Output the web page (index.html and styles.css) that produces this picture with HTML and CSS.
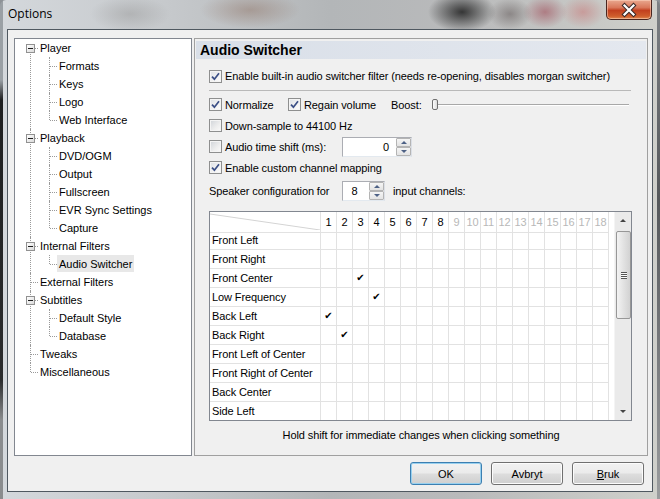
FILE: index.html
```html
<!DOCTYPE html>
<html lang="en">
<head>
<meta charset="UTF-8">
<title>Options</title>
<link rel="stylesheet" href="styles.css">
</head>
<body>
<div class="window">
  <div class="titlebar">
    <span class="title">Options</span>
    <div class="close">
      <svg width="44" height="18" viewBox="0 0 44 18">
        <path d="M17.5 4.5 L26.5 13.5 M26.5 4.5 L17.5 13.5" stroke="#3a2a28" stroke-width="4.2" stroke-linecap="square"/>
        <path d="M17.5 4.5 L26.5 13.5 M26.5 4.5 L17.5 13.5" stroke="#fff" stroke-width="2.2" stroke-linecap="square"/>
      </svg>
    </div>
  </div>

  <div class="client">
    <div class="main">
      <!-- left page tree -->
      <ul class="tree">
        <li class="first"><div class="node"><span class="toggle"></span><span class="label">Player</span></div>
          <ul class="kids">
            <li><div class="node"><span class="label">Formats</span></div></li>
            <li><div class="node"><span class="label">Keys</span></div></li>
            <li><div class="node"><span class="label">Logo</span></div></li>
            <li class="last"><div class="node"><span class="label">Web Interface</span></div></li>
          </ul>
        </li>
        <li><div class="node"><span class="toggle"></span><span class="label">Playback</span></div>
          <ul class="kids">
            <li><div class="node"><span class="label">DVD/OGM</span></div></li>
            <li><div class="node"><span class="label">Output</span></div></li>
            <li><div class="node"><span class="label">Fullscreen</span></div></li>
            <li><div class="node"><span class="label">EVR Sync Settings</span></div></li>
            <li class="last"><div class="node"><span class="label">Capture</span></div></li>
          </ul>
        </li>
        <li><div class="node"><span class="toggle"></span><span class="label">Internal Filters</span></div>
          <ul class="kids">
            <li class="last"><div class="node"><span class="label selected">Audio Switcher</span></div></li>
          </ul>
        </li>
        <li><div class="node"><span class="label">External Filters</span></div></li>
        <li><div class="node"><span class="toggle"></span><span class="label">Subtitles</span></div>
          <ul class="kids">
            <li><div class="node"><span class="label">Default Style</span></div></li>
            <li class="last"><div class="node"><span class="label">Database</span></div></li>
          </ul>
        </li>
        <li><div class="node"><span class="label">Tweaks</span></div></li>
        <li class="last"><div class="node"><span class="label">Miscellaneous</span></div></li>
      </ul>

      <!-- right property page -->
      <div class="page">
        <div class="page-head">Audio Switcher</div>
        <div class="page-body">
          <div class="line first-line">
            <label class="opt"><span class="cb on"><svg width="9" height="9" viewBox="0 0 9 9"><path d="M1 4.6 L3.4 7.2 L8 1.2" fill="none" stroke="#3b4f86" stroke-width="1.7"/></svg></span>Enable built-in audio switcher filter (needs re-opening, disables morgan switcher)</label>
          </div>
          <div class="sep"></div>
          <div class="group">
            <div class="line">
              <label class="opt w-normalize"><span class="cb on"><svg width="9" height="9" viewBox="0 0 9 9"><path d="M1 4.6 L3.4 7.2 L8 1.2" fill="none" stroke="#3b4f86" stroke-width="1.7"/></svg></span>Normalize</label>
              <label class="opt w-regain"><span class="cb on"><svg width="9" height="9" viewBox="0 0 9 9"><path d="M1 4.6 L3.4 7.2 L8 1.2" fill="none" stroke="#3b4f86" stroke-width="1.7"/></svg></span>Regain volume</label>
              <span class="w-boost">Boost:</span>
              <div class="slider"><span class="thumb"></span></div>
            </div>
            <div class="line">
              <label class="opt"><span class="cb"></span>Down-sample to 44100 Hz</label>
            </div>
            <div class="line">
              <label class="opt w-shift"><span class="cb"></span>Audio time shift (ms):</label>
              <div class="spin spin-wide">
                <span class="val">0</span>
                <span class="spin-btns"><span class="up"></span><span class="down"></span></span>
              </div>
            </div>
            <div class="line">
              <label class="opt"><span class="cb on"><svg width="9" height="9" viewBox="0 0 9 9"><path d="M1 4.6 L3.4 7.2 L8 1.2" fill="none" stroke="#3b4f86" stroke-width="1.7"/></svg></span>Enable custom channel mapping</label>
            </div>
          </div>
          <div class="line speaker">
            <span class="w-shift">Speaker configuration for</span>
            <div class="spin spin-small">
              <span class="val center">8</span>
              <span class="spin-btns"><span class="up"></span><span class="down"></span></span>
            </div>
            <span class="after-spin">input channels:</span>
          </div>

          <div class="map">
            <div class="grid">
              <div class="row head">
                <span class="corner"><svg width="110" height="18"><line x1="0" y1="2" x2="110" y2="18" stroke="#d4d4d4"/></svg></span>
                <span>1</span><span>2</span><span>3</span><span>4</span><span>5</span><span>6</span><span>7</span><span>8</span>
                <span class="off">9</span><span class="off">10</span><span class="off">11</span><span class="off">12</span><span class="off">13</span><span class="off">14</span><span class="off">15</span><span class="off">16</span><span class="off">17</span><span class="off">18</span>
              </div>
              <div class="row"><span class="name">Front Left</span><span></span><span></span><span></span><span></span><span></span><span></span><span></span><span></span><span></span><span></span><span></span><span></span><span></span><span></span><span></span><span></span><span></span><span></span></div>
              <div class="row"><span class="name">Front Right</span><span></span><span></span><span></span><span></span><span></span><span></span><span></span><span></span><span></span><span></span><span></span><span></span><span></span><span></span><span></span><span></span><span></span><span></span></div>
              <div class="row"><span class="name">Front Center</span><span></span><span></span><span class="tick">✔</span><span></span><span></span><span></span><span></span><span></span><span></span><span></span><span></span><span></span><span></span><span></span><span></span><span></span><span></span><span></span></div>
              <div class="row"><span class="name">Low Frequency</span><span></span><span></span><span></span><span class="tick">✔</span><span></span><span></span><span></span><span></span><span></span><span></span><span></span><span></span><span></span><span></span><span></span><span></span><span></span><span></span></div>
              <div class="row"><span class="name">Back Left</span><span class="tick">✔</span><span></span><span></span><span></span><span></span><span></span><span></span><span></span><span></span><span></span><span></span><span></span><span></span><span></span><span></span><span></span><span></span><span></span></div>
              <div class="row"><span class="name">Back Right</span><span></span><span class="tick">✔</span><span></span><span></span><span></span><span></span><span></span><span></span><span></span><span></span><span></span><span></span><span></span><span></span><span></span><span></span><span></span><span></span></div>
              <div class="row"><span class="name">Front Left of Center</span><span></span><span></span><span></span><span></span><span></span><span></span><span></span><span></span><span></span><span></span><span></span><span></span><span></span><span></span><span></span><span></span><span></span><span></span></div>
              <div class="row"><span class="name">Front Right of Center</span><span></span><span></span><span></span><span></span><span></span><span></span><span></span><span></span><span></span><span></span><span></span><span></span><span></span><span></span><span></span><span></span><span></span><span></span></div>
              <div class="row"><span class="name">Back Center</span><span></span><span></span><span></span><span></span><span></span><span></span><span></span><span></span><span></span><span></span><span></span><span></span><span></span><span></span><span></span><span></span><span></span><span></span></div>
              <div class="row"><span class="name">Side Left</span><span></span><span></span><span></span><span></span><span></span><span></span><span></span><span></span><span></span><span></span><span></span><span></span><span></span><span></span><span></span><span></span><span></span><span></span></div>
            </div>
            <div class="scrollbar">
              <span class="sb-btn"><span class="arrow-up"></span></span>
              <span class="sb-thumb"><span class="grip"></span></span>
              <span class="sb-track"></span>
              <span class="sb-btn"><span class="arrow-down"></span></span>
            </div>
          </div>

          <div class="hint">Hold shift for immediate changes when clicking something</div>
        </div>
      </div>
    </div>

    <div class="buttons">
      <button class="btn default">OK</button>
      <button class="btn">Avbryt</button>
      <button class="btn"><u>B</u>ruk</button>
    </div>
  </div>
</div>
</body>
</html>
```

FILE: styles.css
```css
* {
  box-sizing: border-box;
}

body {
  margin: 0;
  width: 660px;
  height: 499px;
  overflow: hidden;
  font-family: "Liberation Sans", Arial, sans-serif;
  font-size: 11px;
  color: #000;
  background: #8d9297;
}

/* glass frame */
.window {
  width: 660px;
  height: 499px;
  display: flex;
  flex-direction: column;
  border-radius: 6px 6px 0 0;
  background:
    linear-gradient(#9aa0a5 0, #9aa0a5 80px, #1e1f20 100px, #2b2c2d 380px, #8a8c8e 420px) 0 0 / 3px 100% no-repeat,
    linear-gradient(#7d8185 0, #55585b 200px, #9a9c9e 499px) 657px 0 / 3px 100% no-repeat,
    radial-gradient(ellipse 34px 20px at 462px 12px, rgba(30, 30, 30, 0.85), transparent),
    radial-gradient(ellipse 22px 16px at 510px 14px, rgba(90, 80, 80, 0.5), transparent),
    radial-gradient(ellipse 22px 16px at 545px 12px, rgba(165, 95, 105, 0.7), transparent),
    radial-gradient(ellipse 22px 16px at 583px 12px, rgba(200, 120, 120, 0.55), transparent),
    radial-gradient(ellipse 50px 18px at 250px 10px, rgba(140, 110, 95, 0.45), transparent),
    radial-gradient(ellipse 40px 18px at 130px 14px, rgba(150, 150, 150, 0.45), transparent),
    linear-gradient(to right, #d4d8dc 0%, #c6c9cc 25%, #b3b6b8 50%, #b9babb 70%, #cfd0cb 100%);
}

.titlebar {
  height: 30px;
  flex: none;
  display: flex;
  justify-content: space-between;
  align-items: flex-start;
  padding-left: 8px;
}

.title {
  font-family: "Open Sans", "Noto Sans", sans-serif;
  font-size: 12px;
  line-height: 28px;
  color: #000;
}

.close {
  width: 46px;
  height: 20px;
  margin-right: 8px;
  border: 1px solid #4a2620;
  border-top: none;
  border-radius: 0 0 5px 5px;
  background: linear-gradient(#e9a88f 0%, #d9775a 40%, #c2401f 55%, #cf5d2c 85%, #e08a52 100%);
  box-shadow: inset 0 0 0 1px rgba(255, 220, 200, 0.5);
  display: flex;
  align-items: center;
  justify-content: center;
}

.client {
  flex: 1;
  margin: 0 8px 8px;
  background: #f0f0f0;
  box-shadow: 0 0 0 1px #4f5860;
  display: flex;
  flex-direction: column;
  padding: 8px 8px 6px 6px;
}

.main {
  display: flex;
  gap: 2px;
  height: 418px;
}

/* tree */
.tree, .tree ul {
  list-style: none;
  margin: 0;
  padding: 0;
}

.tree {
  width: 178px;
  flex: none;
  border: 1px solid #828790;
  background: #fff;
}

.tree li {
  position: relative;
}

.tree li::before {
  content: "";
  position: absolute;
  left: 15px;
  top: 0;
  bottom: 0;
  border-left: 1px dotted #9a9a9a;
}

.tree > li.first::before {
  top: 9px;
}

.tree li.last::before {
  bottom: auto;
  height: 9px;
}

.tree li::after {
  content: "";
  position: absolute;
  left: 16px;
  top: 9px;
  width: 7px;
  border-top: 1px dotted #9a9a9a;
}

.tree .kids {
  margin-left: 19px;
}

.node {
  position: relative;
  height: 18px;
  line-height: 18px;
  padding-left: 23px;
  white-space: nowrap;
}

.toggle {
  position: absolute;
  z-index: 1;
  left: 11px;
  top: 5px;
  width: 9px;
  height: 9px;
  border: 1px solid #919191;
  background: linear-gradient(135deg, #ffffff, #dadada);
}

.toggle::before {
  content: "";
  position: absolute;
  left: 1px;
  top: 3px;
  width: 5px;
  height: 1px;
  background: #1e1e1e;
}

.label {
  position: relative;
  z-index: 1;
  padding: 0 2px;
  display: inline-block;
  height: 17px;
}

.label.selected {
  background: #e8e8e8;
}

/* property page */
.page {
  flex: 1;
  border: 1px solid #a0a0a0;
  padding: 1px;
  display: flex;
  flex-direction: column;
}

.page-head {
  height: 18px;
  margin-top: 1px;
  padding-left: 4px;
  font-size: 14px;
  font-weight: bold;
  line-height: 18px;
  background: linear-gradient(to right, #d9dfe8, #e4e8ef);
}

.page-body {
  padding: 0 14px 0 13px;
  letter-spacing: -0.1px;
}

.line {
  display: flex;
  align-items: center;
  height: 21px;
  white-space: nowrap;
}

.first-line {
  height: 18px;
  margin-top: 8px;
}

.sep {
  height: 1px;
  margin-top: 5px;
  margin-right: 1px;
  background: #b9b9b9;
}

.group {
  margin-top: 3px;
}

.opt {
  display: flex;
  align-items: center;
}

.cb {
  flex: none;
  width: 13px;
  height: 13px;
  margin-right: 3px;
  border: 1px solid #8e8f8f;
  background: linear-gradient(135deg, #cfd3d8 0%, #eeeeee 60%, #fafafa 100%);
  box-shadow: inset 0 0 0 1px #f4f4f4;
  display: flex;
  align-items: center;
  justify-content: center;
}

.cb.on {
  background: linear-gradient(135deg, #dde1e6 0%, #f3f3f3 60%, #fdfdfd 100%);
}

.w-normalize { width: 79px; }
.w-regain { width: 103px; }
.w-boost { width: 37px; }
.w-shift { width: 133px; }

.slider {
  flex: 1;
  height: 18px;
  margin-right: 3px;
  padding-left: 4px;
  display: flex;
  align-items: center;
  background:
    linear-gradient(#a8a8a8, #a8a8a8) 4px 8px / calc(100% - 4px) 1px no-repeat,
    linear-gradient(#ffffff, #ffffff) 4px 9px / calc(100% - 4px) 1px no-repeat;
}

.thumb {
  width: 6px;
  height: 11px;
  border: 1px solid #707070;
  border-radius: 2px;
  background: linear-gradient(to right, #fdfdfd, #dcdcdc);
}

.spin {
  height: 20px;
  display: flex;
  border: 1px solid #abadb3;
  border-right-color: #dbdfe6;
  border-bottom-color: #e3e9ef;
  background: #fff;
}

.spin-wide { width: 70px; }
.spin-small { width: 43px; }

.spin .val {
  flex: 1;
  text-align: right;
  padding-right: 6px;
  line-height: 18px;
}

.spin .val.center {
  text-align: center;
  padding-right: 2px;
}

.spin-btns {
  width: 16px;
  display: flex;
  flex-direction: column;
  padding: 0 0 0 1px;
}

.spin-btns span {
  flex: 1;
  border: 1px solid #b4b4b4;
  border-radius: 1px;
  background: linear-gradient(#f5f5f5, #e3e3e3);
  position: relative;
}

.spin-btns .up::after,
.spin-btns .down::after {
  content: "";
  position: absolute;
  left: 4px;
  top: 2px;
  border-left: 3px solid transparent;
  border-right: 3px solid transparent;
}

.spin-btns .up::after {
  border-bottom: 3px solid #4d6185;
}

.spin-btns .down::after {
  border-top: 3px solid #4d6185;
}

.speaker {
  height: 21px;
  margin-top: 2px;
}

.after-spin {
  margin-left: 8px;
}

/* channel mapping grid */
.map {
  display: flex;
  width: 423px;
  height: 210px;
  margin-top: 10px;
  border: 1px solid #828790;
  background: #fff;
  overflow: hidden;
  letter-spacing: 0;
}

.grid {
  width: 399px;
  flex: none;
}

.row {
  display: grid;
  grid-template-columns: 111px repeat(18, 16px);
  height: 19px;
}

.row span {
  border-right: 1px solid #e2e2e2;
  border-bottom: 1px solid #e2e2e2;
  line-height: 18px;
  text-align: center;
}

.row .name {
  text-align: left;
  padding-left: 2px;
  white-space: nowrap;
  letter-spacing: -0.1px;
}

.row .corner {
  text-align: left;
}

.row .corner svg {
  display: block;
}

.head span {
  line-height: 20px;
}

.head .off {
  color: #b8b8b8;
}

.tick {
  font-family: "DejaVu Sans", sans-serif;
  font-size: 10px;
}

.scrollbar {
  width: 17px;
  margin-left: 5px;
  display: flex;
  flex-direction: column;
  background: #eaeaea;
  border-left: 1px solid #f4f4f4;
}

.sb-btn {
  height: 17px;
  flex: none;
  display: flex;
  align-items: center;
  justify-content: center;
}

.arrow-up {
  border-left: 3px solid transparent;
  border-right: 3px solid transparent;
  border-bottom: 3px solid #444;
}

.arrow-down {
  border-left: 3px solid transparent;
  border-right: 3px solid transparent;
  border-top: 3px solid #444;
}

.sb-thumb {
  height: 88px;
  margin: 2px 0 0 1px;
  width: 15px;
  border: 1px solid #979797;
  border-radius: 2px;
  background: linear-gradient(to right, #f3f3f3, #e2e2e2 50%, #d2d2d2);
  display: flex;
  align-items: center;
  justify-content: center;
}

.grip {
  width: 6px;
  height: 7px;
  background: repeating-linear-gradient(#555 0 1px, #fafafa 1px 2px);
}

.sb-track {
  flex: 1;
}

.hint {
  margin-top: 6px;
  margin-right: -14px;
  margin-left: -13px;
  line-height: 16px;
  text-align: center;
}

/* dialog buttons */
.buttons {
  display: flex;
  justify-content: flex-end;
  gap: 9px;
  margin-top: 6px;
}

.btn {
  width: 72px;
  height: 23px;
  padding: 0;
  border: 1px solid #707070;
  border-radius: 3px;
  background: linear-gradient(#f2f2f2 0%, #ebebeb 48%, #dddddd 52%, #cfcfcf 100%);
  box-shadow: inset 0 0 0 1px #fcfcfc;
  font-family: "Liberation Sans", Arial, sans-serif;
  font-size: 11px;
  color: #000;
}

.btn.default {
  border-color: #3c7fb1;
  box-shadow: inset 0 0 0 1px #97d0ef;
}
```
